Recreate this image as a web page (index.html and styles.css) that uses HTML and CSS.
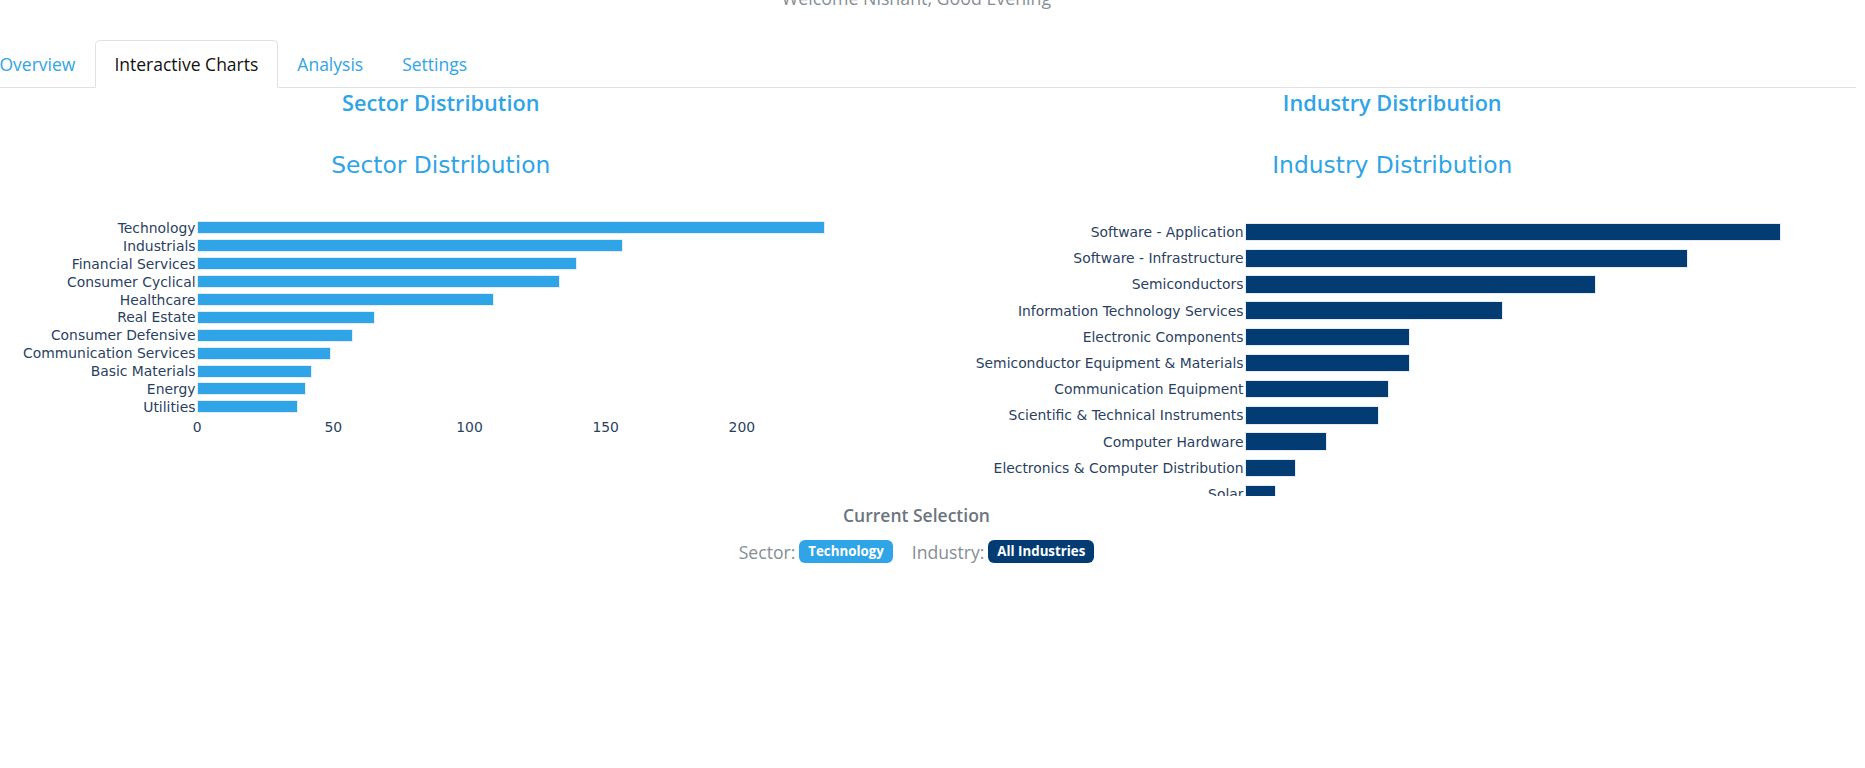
FILE: index.html
```html
<!DOCTYPE html>
<html lang="en">
<head>
<meta charset="utf-8">
<title>Interactive Charts</title>
<link rel="stylesheet" href="styles.css">
</head>
<body>
<div class="page">
  <p class="welcome">Welcome Nishant, Good Evening</p>
  <ul class="tabs">
    <li><a class="tab">Overview</a></li>
    <li><a class="tab active">Interactive Charts</a></li>
    <li><a class="tab">Analysis</a></li>
    <li><a class="tab">Settings</a></li>
  </ul>
  <div class="row">
    <section class="col">
      <h4 class="chart-heading">Sector Distribution</h4>
      <div class="chart chart-sector">
        <div class="chart-title">Sector Distribution</div>
        <div class="plot">
          <div class="bar-row"><span class="label">Technology</span><span class="bar-cell"><span class="bar" style="width:628px"></span></span></div>
          <div class="bar-row"><span class="label">Industrials</span><span class="bar-cell"><span class="bar" style="width:426px"></span></span></div>
          <div class="bar-row"><span class="label">Financial Services</span><span class="bar-cell"><span class="bar" style="width:380px"></span></span></div>
          <div class="bar-row"><span class="label">Consumer Cyclical</span><span class="bar-cell"><span class="bar" style="width:363px"></span></span></div>
          <div class="bar-row"><span class="label">Healthcare</span><span class="bar-cell"><span class="bar" style="width:297px"></span></span></div>
          <div class="bar-row"><span class="label">Real Estate</span><span class="bar-cell"><span class="bar" style="width:178px"></span></span></div>
          <div class="bar-row"><span class="label">Consumer Defensive</span><span class="bar-cell"><span class="bar" style="width:156px"></span></span></div>
          <div class="bar-row"><span class="label">Communication Services</span><span class="bar-cell"><span class="bar" style="width:134px"></span></span></div>
          <div class="bar-row"><span class="label">Basic Materials</span><span class="bar-cell"><span class="bar" style="width:115px"></span></span></div>
          <div class="bar-row"><span class="label">Energy</span><span class="bar-cell"><span class="bar" style="width:109px"></span></span></div>
          <div class="bar-row"><span class="label">Utilities</span><span class="bar-cell"><span class="bar" style="width:101px"></span></span></div>
        </div>
        <div class="axis">
          <span class="tick">0</span><span class="tick">50</span><span class="tick">100</span><span class="tick">150</span><span class="tick">200</span>
        </div>
      </div>
    </section>
    <section class="col">
      <h4 class="chart-heading">Industry Distribution</h4>
      <div class="chart chart-industry">
        <div class="chart-title">Industry Distribution</div>
        <div class="plot">
          <div class="bar-row"><span class="label">Software - Application</span><span class="bar-cell"><span class="bar" style="width:536px"></span></span></div>
          <div class="bar-row"><span class="label">Software - Infrastructure</span><span class="bar-cell"><span class="bar" style="width:443px"></span></span></div>
          <div class="bar-row"><span class="label">Semiconductors</span><span class="bar-cell"><span class="bar" style="width:351px"></span></span></div>
          <div class="bar-row"><span class="label">Information Technology Services</span><span class="bar-cell"><span class="bar" style="width:258px"></span></span></div>
          <div class="bar-row"><span class="label">Electronic Components</span><span class="bar-cell"><span class="bar" style="width:165px"></span></span></div>
          <div class="bar-row"><span class="label">Semiconductor Equipment &amp; Materials</span><span class="bar-cell"><span class="bar" style="width:165px"></span></span></div>
          <div class="bar-row"><span class="label">Communication Equipment</span><span class="bar-cell"><span class="bar" style="width:144px"></span></span></div>
          <div class="bar-row"><span class="label">Scientific &amp; Technical Instruments</span><span class="bar-cell"><span class="bar" style="width:134px"></span></span></div>
          <div class="bar-row"><span class="label">Computer Hardware</span><span class="bar-cell"><span class="bar" style="width:82px"></span></span></div>
          <div class="bar-row"><span class="label">Electronics &amp; Computer Distribution</span><span class="bar-cell"><span class="bar" style="width:51px"></span></span></div>
          <div class="bar-row"><span class="label">Solar</span><span class="bar-cell"><span class="bar" style="width:31px"></span></span></div>
        </div>
      </div>
    </section>
  </div>
  <div class="selection">
    <h5 class="selection-title">Current Selection</h5>
    <div class="selection-row">
      <span class="sel-label">Sector:</span><span class="badge badge-sector">Technology</span>
      <span class="sel-label sel-gap">Industry:</span><span class="badge badge-industry">All Industries</span>
    </div>
  </div>
</div>
</body>
</html>
```
FILE: styles.css
```css
html, body {
  margin: 0;
  padding: 0;
  background: #fff;
}
body {
  overflow: hidden;
  font-family: "Open Sans", "Noto Sans", sans-serif;
  color: #495057;
}
.page {
  width: 1879px;
  margin-left: -23px;
}
.welcome {
  margin: -14px 0 0;
  height: 24px;
  line-height: 24px;
  font-size: 17.8px;
  color: #868e96;
  text-align: center;
}
.tabs {
  display: flex;
  list-style: none;
  margin: 30px 0 0;
  padding: 0 0 0 3px;
  border-bottom: 1px solid #dee2e6;
}
.tab {
  display: block;
  padding: 10px 18.5px;
  line-height: 26px;
  font-size: 17.5px;
  color: #2fa4e7;
  border: 1px solid transparent;
  border-radius: 5px 5px 0 0;
  margin-bottom: -1px;
}
.tab.active {
  color: #111;
  background: #fff;
  border-color: #dee2e6 #dee2e6 #fff;
}
.row {
  display: flex;
  margin: 0 -12px;
}
.col {
  flex: 1 1 0;
  padding: 0 12px;
  min-width: 0;
}
.chart-heading {
  margin: 3px 0 0;
  line-height: 24px;
  font-size: 21.7px;
  font-weight: 600;
  color: #2fa4e7;
  text-align: center;
}
.chart {
  height: 381px;
  overflow: hidden;
  padding-top: 37px;
  box-sizing: border-box;
  font-family: Verdana, "DejaVu Sans", sans-serif;
  color: #2a3f5f;
}
.chart-title {
  line-height: 26px;
  font-size: 23.4px;
  color: #2fa4e7;
  text-align: center;
}
.plot {
  margin-top: 41px;
}
.bar-row {
  display: flex;
  align-items: center;
  font-size: 13.9px;
}
.label {
  flex: none;
  box-sizing: border-box;
  padding-right: 1px;
  text-align: right;
  white-space: nowrap;
}
.bar-cell {
  flex: 1;
  display: flex;
  align-items: center;
}
.bar {
  display: block;
  box-sizing: border-box;
  border: 1px solid #e5ecf6;
}
.chart-sector .bar-row { height: 17.9px; }
.chart-sector .label { width: 219.5px; }
.chart-sector .bar { height: 13px; background: #2fa4e7; }
.chart-industry .bar-row { height: 26.2px; }
.chart-industry .label { width: 316px; }
.chart-industry .bar { height: 18.5px; background: #033c73; }
.axis {
  display: flex;
  margin-top: 3px;
  padding-left: 152px;
  font-size: 13.9px;
  line-height: 16px;
}
.tick {
  width: 136.2px;
  text-align: center;
  flex: none;
}
.selection {
  text-align: center;
}
.selection-title {
  margin: 8px 0 0;
  line-height: 22px;
  font-size: 17.5px;
  font-weight: 600;
  color: #6c757d;
}
.selection-row {
  margin-top: 12px;
  display: flex;
  justify-content: center;
  align-items: center;
  height: 27px;
}
.sel-label {
  font-size: 17.6px;
  color: #868e96;
  margin-right: 4px;
}
.sel-gap {
  margin-left: 19px;
}
.badge {
  display: inline-block;
  height: 23px;
  line-height: 23px;
  padding: 0 9px;
  border-radius: 6px;
  font-size: 13.3px;
  font-weight: 700;
  color: #fff;
}
.badge-sector { background: #2fa4e7; }
.badge-industry { background: #033c73; }
```
